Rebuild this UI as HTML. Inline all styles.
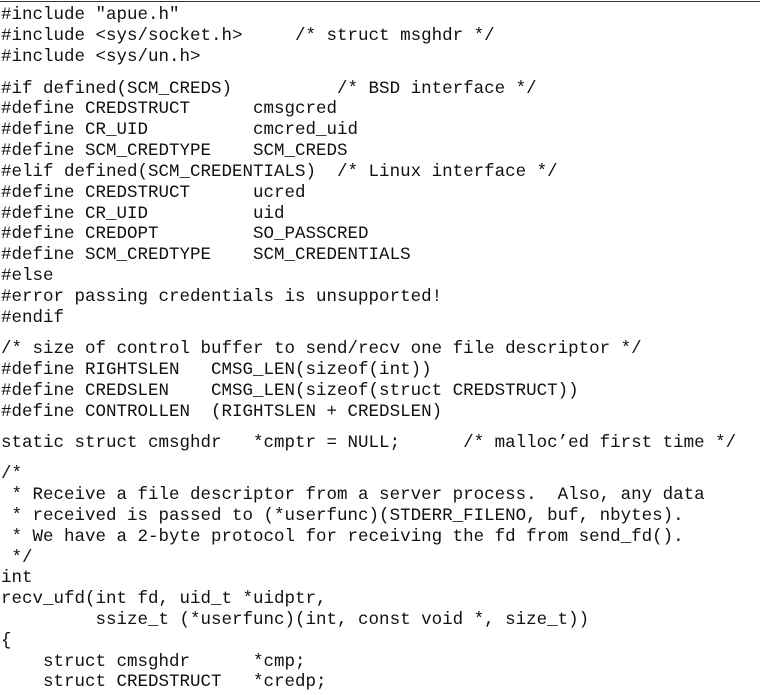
<!DOCTYPE html>
<html><head><meta charset="utf-8"><style>
html,body{margin:0;padding:0;background:#fff;width:760px;height:695px;overflow:hidden;position:relative}
.rule{position:absolute;left:0;top:1px;width:760px;height:1px;background:#333}
.w{position:absolute;left:0;top:2px;width:760px;height:693px}
.l{position:absolute;left:1px;height:21px;line-height:21px;font-family:"Liberation Mono",monospace;font-size:17.5px;color:#111;white-space:pre}
</style></head><body>
<div class="rule"></div>
<div class="w">
<div class="l" style="top:3px">#include "apue.h"</div>
<div class="l" style="top:24px">#include &lt;sys/socket.h&gt;     /* struct msghdr */</div>
<div class="l" style="top:45px">#include &lt;sys/un.h&gt;</div>
<div class="l" style="top:77px">#if defined(SCM_CREDS)          /* BSD interface */</div>
<div class="l" style="top:97px">#define CREDSTRUCT      cmsgcred</div>
<div class="l" style="top:118px">#define CR_UID          cmcred_uid</div>
<div class="l" style="top:139px">#define SCM_CREDTYPE    SCM_CREDS</div>
<div class="l" style="top:160px">#elif defined(SCM_CREDENTIALS)  /* Linux interface */</div>
<div class="l" style="top:181px">#define CREDSTRUCT      ucred</div>
<div class="l" style="top:202px">#define CR_UID          uid</div>
<div class="l" style="top:222px">#define CREDOPT         SO_PASSCRED</div>
<div class="l" style="top:243px">#define SCM_CREDTYPE    SCM_CREDENTIALS</div>
<div class="l" style="top:264px">#else</div>
<div class="l" style="top:285px">#error passing credentials is unsupported!</div>
<div class="l" style="top:306px">#endif</div>
<div class="l" style="top:337px">/* size of control buffer to send/recv one file descriptor */</div>
<div class="l" style="top:358px">#define RIGHTSLEN   CMSG_LEN(sizeof(int))</div>
<div class="l" style="top:379px">#define CREDSLEN    CMSG_LEN(sizeof(struct CREDSTRUCT))</div>
<div class="l" style="top:400px">#define CONTROLLEN  (RIGHTSLEN + CREDSLEN)</div>
<div class="l" style="top:431px">static struct cmsghdr   *cmptr = NULL;      /* malloc’ed first time */</div>
<div class="l" style="top:462px">/*</div>
<div class="l" style="top:483px"> * Receive a file descriptor from a server process.  Also, any data</div>
<div class="l" style="top:504px"> * received is passed to (*userfunc)(STDERR_FILENO, buf, nbytes).</div>
<div class="l" style="top:525px"> * We have a 2-byte protocol for receiving the fd from send_fd().</div>
<div class="l" style="top:546px"> */</div>
<div class="l" style="top:566px">int</div>
<div class="l" style="top:587px">recv_ufd(int fd, uid_t *uidptr,</div>
<div class="l" style="top:608px">         ssize_t (*userfunc)(int, const void *, size_t))</div>
<div class="l" style="top:629px">{</div>
<div class="l" style="top:650px">    struct cmsghdr      *cmp;</div>
<div class="l" style="top:670px">    struct CREDSTRUCT   *credp;</div>
</div>
</body></html>
